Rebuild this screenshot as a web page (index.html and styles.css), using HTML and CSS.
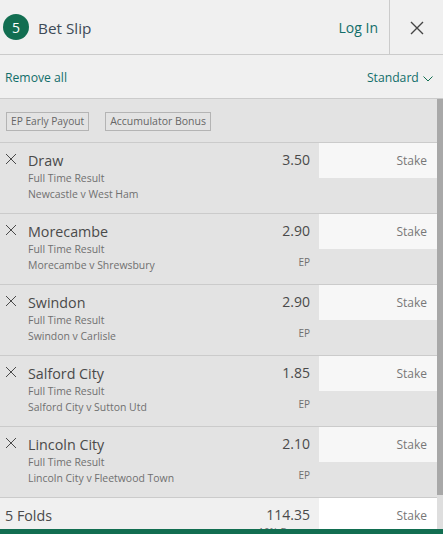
FILE: index.html
```html
<!DOCTYPE html>
<html lang="en">
<head>
    <meta charset="UTF-8">
    <meta name="viewport" content="width=device-width, initial-scale=1.0">
    <title>Bet Slip</title>
    <link rel="stylesheet" href="styles.css">
</head>
<body>
    <div class="slip">
        <header class="slip-header">
            <span class="slip-count">5</span>
            <span class="slip-title">Bet Slip</span>
            <a class="login">Log In</a>
            <button class="close" type="button" aria-label="Close">
                <svg width="14" height="14" viewBox="0 0 14 14"><path d="M1 1l12 12M13 1L1 13" /></svg>
            </button>
        </header>

        <div class="slip-actions">
            <a class="remove-all">Remove all</a>
            <a class="bet-type">Standard
                <svg width="10" height="6" viewBox="0 0 10 6"><path d="M.5 .5L5 5l4.500-4.500" /></svg>
            </a>
        </div>

        <div class="slip-body">
            <div class="slip-scroll">
                <div class="promos">
                    <span class="promo promo-early">EP Early Payout</span>
                    <span class="promo">Accumulator Bonus</span>
                </div>

                <div class="bet">
                    <svg class="bet-remove" width="12" height="12" viewBox="0 0 12 12"><path d="M1 1l10 10M11 1L1 11" /></svg>
                    <div class="bet-info">
                        <div class="bet-name">Draw</div>
                        <div class="bet-meta">Full Time Result</div>
                        <div class="bet-meta">Newcastle v West Ham</div>
                    </div>
                    <div class="bet-odds">
                        <div class="odds">3.50</div>
                    </div>
                    <div class="stake">Stake</div>
                </div>

                <div class="bet">
                    <svg class="bet-remove" width="12" height="12" viewBox="0 0 12 12"><path d="M1 1l10 10M11 1L1 11" /></svg>
                    <div class="bet-info">
                        <div class="bet-name">Morecambe</div>
                        <div class="bet-meta">Full Time Result</div>
                        <div class="bet-meta">Morecambe v Shrewsbury</div>
                    </div>
                    <div class="bet-odds">
                        <div class="odds">2.90</div>
                        <div class="ep">EP</div>
                    </div>
                    <div class="stake">Stake</div>
                </div>

                <div class="bet">
                    <svg class="bet-remove" width="12" height="12" viewBox="0 0 12 12"><path d="M1 1l10 10M11 1L1 11" /></svg>
                    <div class="bet-info">
                        <div class="bet-name">Swindon</div>
                        <div class="bet-meta">Full Time Result</div>
                        <div class="bet-meta">Swindon v Carlisle</div>
                    </div>
                    <div class="bet-odds">
                        <div class="odds">2.90</div>
                        <div class="ep">EP</div>
                    </div>
                    <div class="stake">Stake</div>
                </div>

                <div class="bet">
                    <svg class="bet-remove" width="12" height="12" viewBox="0 0 12 12"><path d="M1 1l10 10M11 1L1 11" /></svg>
                    <div class="bet-info">
                        <div class="bet-name">Salford City</div>
                        <div class="bet-meta">Full Time Result</div>
                        <div class="bet-meta">Salford City v Sutton Utd</div>
                    </div>
                    <div class="bet-odds">
                        <div class="odds">1.85</div>
                        <div class="ep">EP</div>
                    </div>
                    <div class="stake">Stake</div>
                </div>

                <div class="bet">
                    <svg class="bet-remove" width="12" height="12" viewBox="0 0 12 12"><path d="M1 1l10 10M11 1L1 11" /></svg>
                    <div class="bet-info">
                        <div class="bet-name">Lincoln City</div>
                        <div class="bet-meta">Full Time Result</div>
                        <div class="bet-meta">Lincoln City v Fleetwood Town</div>
                    </div>
                    <div class="bet-odds">
                        <div class="odds">2.10</div>
                        <div class="ep">EP</div>
                    </div>
                    <div class="stake">Stake</div>
                </div>

                <div class="folds">
                    <div class="folds-name">5 Folds</div>
                    <div class="bet-odds">
                        <div class="odds">114.35</div>
                        <div class="ep">10% Bonus</div>
                    </div>
                    <div class="stake stake-white">Stake</div>
                </div>
            </div>

            <div class="scrollbar">
                <div class="scrollbar-thumb"></div>
            </div>
        </div>

        <div class="slip-footer"></div>
    </div>
</body>
</html>
```

FILE: styles.css
```css
* {
    box-sizing: border-box;
}
html, body {
    height: 100%;
}
body {
    margin: 0;
    font-family: "Open Sans", "Noto Sans", Arial, sans-serif;
    background-color: #e3e3e3;
    color: #444;
    overflow: hidden;
}
.slip {
    height: 534px;
    display: flex;
    flex-direction: column;
}

/* header */
.slip-header {
    height: 55px;
    flex: none;
    display: flex;
    align-items: center;
    padding-left: 3px;
    background-color: #f0f0f0;
    border-bottom: 1px solid #cbcbcb;
}
.slip-count {
    width: 26px;
    height: 26px;
    border-radius: 50%;
    background-color: #126e51;
    color: #fff;
    font-size: 14px;
    display: flex;
    align-items: center;
    justify-content: center;
}
.slip-title {
    margin-left: 9px;
    padding-top: 1px;
    font-size: 15.3px;
    color: #3d4a57;
}
.login {
    margin: 0 11px 0 auto;
    padding-top: 1px;
    font-size: 14px;
    color: #126e6a;
}
.close {
    width: 54px;
    height: 54px;
    padding: 1px 0 0 1px;
    background: none;
    border: none;
    border-left: 1px solid #cbcbcb;
    display: flex;
    align-items: center;
    justify-content: center;
}
.close path {
    fill: none;
    stroke: #444;
    stroke-width: 1.4;
}

/* remove all / bet type */
.slip-actions {
    height: 44px;
    flex: none;
    display: flex;
    align-items: center;
    justify-content: space-between;
    padding: 2px 10px 0 5px;
    background-color: #f0f0f0;
    border-bottom: 1px solid #cbcbcb;
    font-size: 12.2px;
    color: #126e6a;
}
.bet-type svg {
    margin-left: 1px;
}
.bet-type path {
    fill: none;
    stroke: #126e51;
}

/* scrolling list */
.slip-body {
    flex: 1;
    min-height: 0;
    display: flex;
}
.slip-scroll {
    flex: 1;
    min-width: 0;
    overflow: hidden;
}
.scrollbar {
    width: 6px;
    flex: none;
    background-color: #dedede;
}
.scrollbar-thumb {
    height: 396px;
    background-color: #a8a8a8;
}

.promos {
    height: 44px;
    display: flex;
    align-items: center;
    padding: 2px 0 0 6px;
    gap: 16px;
    border-bottom: 1px solid #cbcbcb;
}
.promo {
    height: 19px;
    padding: 0 4px;
    border: 1px solid #b4b4b4;
    font-size: 10.5px;
    line-height: 16px;
    color: #666;
}
.promo-early {
    font-size: 10.2px;
}

.bet {
    height: 71px;
    display: flex;
    border-bottom: 1px solid #cbcbcb;
}
.bet-remove {
    flex: none;
    margin: 10px 0 0 5px;
}
.bet-remove path {
    fill: none;
    stroke: #4a4a4a;
}
.bet-info {
    flex: 1;
    min-width: 0;
    margin-left: 11px;
    padding-top: 9px;
}
.bet-name {
    font-size: 14.3px;
    line-height: 18px;
    color: #4a4a4a;
}
.bet-meta {
    font-size: 10.45px;
    line-height: 16px;
    color: #707070;
}
.bet-odds {
    width: 70px;
    flex: none;
    padding: 7px 9px 0 0;
    text-align: right;
}
.odds {
    font-size: 14px;
    line-height: 20px;
    color: #4a4a4a;
}
.ep {
    margin-top: 14px;
    font-size: 10px;
    line-height: 14px;
    color: #707070;
}
.stake {
    width: 118px;
    height: 35px;
    flex: none;
    padding: 0 10px 0 0;
    background-color: #f7f7f7;
    font-size: 12px;
    line-height: 35px;
    text-align: right;
    color: #777;
}
.stake-white {
    background-color: #fff;
}

.folds {
    height: 70px;
    display: flex;
    background-color: #f0f0f0;
}
.folds-name {
    flex: 1;
    padding: 9px 0 0 5px;
    font-size: 14.3px;
    line-height: 18px;
    color: #4a4a4a;
}
.folds .ep {
    margin-top: 0;
}
.folds .stake {
    height: 70px;
}

.slip-footer {
    height: 5px;
    flex: none;
    background-color: #126e51;
}
```
